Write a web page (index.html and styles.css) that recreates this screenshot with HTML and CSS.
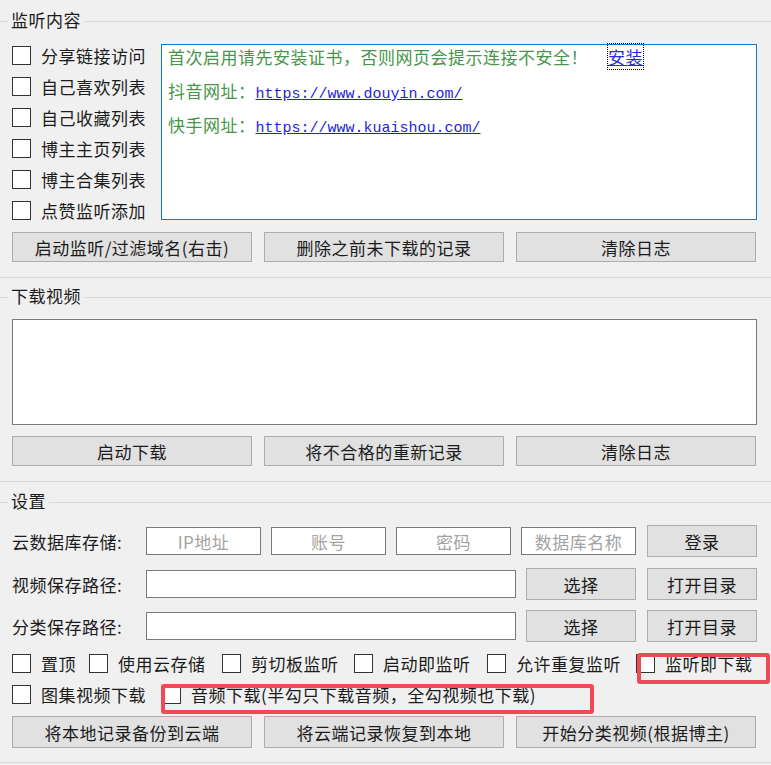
FILE: index.html
```html
<!DOCTYPE html>
<html lang="zh-CN">
<head>
<meta charset="utf-8">
<title>监听下载</title>
<link rel="stylesheet" href="styles.css">
</head>
<body>
<div class="group g1">
  <div class="legend"><span>监听内容</span></div>
  <div class="monitor">
    <div class="checklist">
      <div class="cb"><span class="box"></span>分享链接访问</div>
      <div class="cb"><span class="box"></span>自己喜欢列表</div>
      <div class="cb"><span class="box"></span>自己收藏列表</div>
      <div class="cb"><span class="box"></span>博主主页列表</div>
      <div class="cb"><span class="box"></span>博主合集列表</div>
      <div class="cb"><span class="box"></span>点赞监听添加</div>
    </div>
    <div class="rich">
      <p>首次启用请先安装证书，否则网页会提示连接不安全！<a class="install">安装</a></p>
      <p>抖音网址：<a class="url">https://www.douyin.com/</a></p>
      <p>快手网址：<a class="url">https://www.kuaishou.com/</a></p>
    </div>
  </div>
  <div class="btnrow">
    <button class="btn">启动监听/过滤域名(右击)</button>
    <button class="btn">删除之前未下载的记录</button>
    <button class="btn">清除日志</button>
  </div>
</div>

<div class="group g2">
  <div class="legend"><span>下载视频</span></div>
  <div class="logbox"></div>
  <div class="btnrow">
    <button class="btn">启动下载</button>
    <button class="btn">将不合格的重新记录</button>
    <button class="btn">清除日志</button>
  </div>
</div>

<div class="group g3">
  <div class="legend"><span>设置</span></div>
  <div class="frow r1">
    <div class="flabel">云数据库存储:</div>
    <div class="input small">IP地址</div>
    <div class="input small">账号</div>
    <div class="input small">密码</div>
    <div class="input small">数据库名称</div>
    <button class="btn sbtn">登录</button>
  </div>
  <div class="frow r2">
    <div class="flabel">视频保存路径:</div>
    <div class="input wide"></div>
    <button class="btn sbtn">选择</button>
    <button class="btn sbtn last">打开目录</button>
  </div>
  <div class="frow r3">
    <div class="flabel">分类保存路径:</div>
    <div class="input wide"></div>
    <button class="btn sbtn">选择</button>
    <button class="btn sbtn last">打开目录</button>
  </div>
  <div class="opts">
    <div class="cb"><span class="box"></span>置顶</div>
    <div class="cb"><span class="box"></span>使用云存储</div>
    <div class="cb"><span class="box"></span>剪切板监听</div>
    <div class="cb"><span class="box"></span>启动即监听</div>
    <div class="cb"><span class="box"></span>允许重复监听</div>
    <div class="cb"><span class="box"></span>监听即下载</div>
  </div>
  <div class="opts2">
    <div class="cb"><span class="box"></span>图集视频下载</div>
    <div class="cb"><span class="box"></span>音频下载(半勾只下载音频，全勾视频也下载)</div>
  </div>
  <div class="btnrow last-row">
    <button class="btn">将本地记录备份到云端</button>
    <button class="btn">将云端记录恢复到本地</button>
    <button class="btn">开始分类视频(根据博主)</button>
  </div>
</div>

<div class="mark mark1"></div>
<div class="mark mark2"></div>
</body>
</html>
```
FILE: styles.css
```css
* { box-sizing: border-box; }

body {
  margin: 0;
  width: 771px;
  height: 765px;
  overflow: hidden;
  position: relative;
  background: #f0f0f0;
  font-family: "Noto Sans CJK SC", "Noto Sans", sans-serif;
  font-size: 17px;
  letter-spacing: 0.5px;
  color: #1b1b1b;
}

.group {
  border-bottom: 1px solid #dadada;
}

.g1 { padding: 10px 0 15px; }
.g2 { padding: 8px 0 15px; }
.g3 { padding: 9px 0 14px; }

.legend {
  display: flex;
  align-items: flex-start;
  height: 22px;
}
.legend::before,
.legend::after {
  content: "";
  margin-top: 11px;
  border-top: 1px solid #dadada;
}
.legend::before { width: 8px; }
.legend::after { flex: 1; }
.legend span {
  padding: 0 3px;
  line-height: 20px;
  white-space: nowrap;
}

.monitor {
  display: flex;
  align-items: flex-start;
  height: 176px;
  margin-top: 12px;
  padding-left: 12px;
}

.checklist {
  width: 149px;
  margin-top: -4px;
}

.cb {
  display: flex;
  align-items: center;
  height: 31px;
  white-space: nowrap;
}

.box {
  flex: none;
  width: 19px;
  height: 19px;
  border: 1px solid #333;
  background: #fff;
  margin-right: 10px;
}

.rich {
  width: 596px;
  height: 176px;
  border: 1px solid #0a7bd6;
  background: #fff;
  padding: 1px 0 0 6px;
}
.rich p {
  margin: 0 0 12px;
  height: 22px;
  line-height: 22px;
  color: #47964a;
  white-space: nowrap;
  letter-spacing: 0.5px;
}
.install {
  margin-left: 20px;
  color: #2a2ae0;
  text-decoration: underline;
  outline: 1px dotted #000;
}
.url {
  font-family: "Liberation Mono", monospace;
  font-size: 15px;
  line-height: 1;
  letter-spacing: 0;
  color: #1f1fd8;
  text-decoration: underline;
}

.btnrow {
  display: flex;
  gap: 12px;
  padding-left: 12px;
  margin-top: 12px;
}

.btn {
  flex: none;
  width: 240px;
  height: 30px;
  padding: 0;
  background: #e1e1e1;
  border: 1px solid #adadad;
  font: inherit;
  letter-spacing: 0.5px;
  color: #1b1b1b;
  display: flex;
  align-items: center;
  justify-content: center;
}

.logbox {
  margin: 11px 0 0 12px;
  width: 745px;
  height: 106px;
  background: #fff;
  border: 1px solid #7a7a7a;
}
.g2 .btnrow { margin-top: 11px; }

.frow {
  display: flex;
  align-items: center;
  height: 32px;
  padding-left: 12px;
}
.r1 { margin-top: 12px; }
.r2 { margin-top: 11px; }
.r3 { margin-top: 10px; }

.flabel {
  width: 134px;
  white-space: nowrap;
}

.input {
  height: 28px;
  background: #fff;
  border: 1px solid #7a7a7a;
  margin-right: 10px;
}
.input.small {
  width: 115px;
  display: flex;
  align-items: center;
  justify-content: center;
  color: #a3a3a3;
  white-space: nowrap;
}
.input.small:nth-of-type(5) { margin-right: 11px; }
.input.wide { width: 370px; }

.sbtn {
  width: 110px;
  height: 32px;
}
.sbtn.last { margin-left: 11px; }

.opts {
  display: grid;
  grid-template-columns: 77px 133px 132px 133px 149px auto;
  padding-left: 12px;
  margin-top: 10px;
}
.opts .cb,
.opts2 .cb { height: 22px; }

.opts2 {
  display: grid;
  grid-template-columns: 150px auto;
  padding-left: 12px;
  margin-top: 9px;
}

.last-row { margin-top: 11px; }
.last-row .btn { height: 32px; }

.mark {
  position: absolute;
  border: 4px solid #ef4a55;
  border-radius: 3px;
}
.mark1 {
  left: 637px;
  top: 653px;
  width: 133px;
  height: 31px;
}
.mark2 {
  left: 161px;
  top: 684px;
  width: 433px;
  height: 30px;
}
```
